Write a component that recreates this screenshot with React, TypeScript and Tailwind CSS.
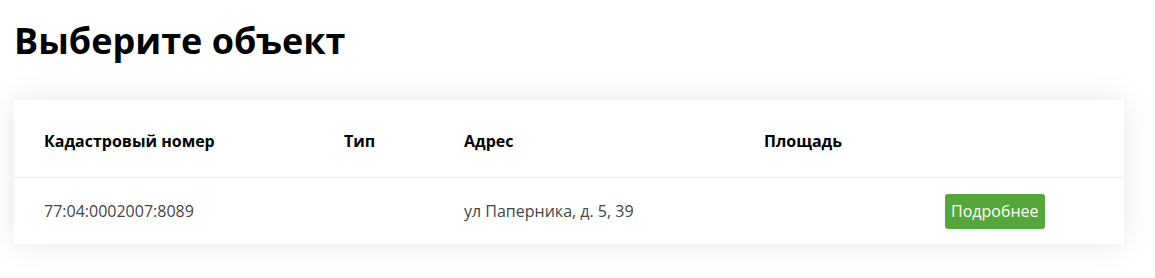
import React from "react";

export default function App() {
  return (
    <div className="min-h-[278px] w-[1155px] bg-white font-['Open_Sans',sans-serif]">
      <div className="px-[14px] pt-[17px]">
        <h1 className="text-[36px] font-bold leading-[48px] text-black">Выберите объект</h1>
        <div className="mt-[35px] w-[1110px] bg-white shadow-[0_0_30px_rgba(0,0,0,0.1)]">
          <div className="grid h-[78px] grid-cols-[300px_120px_300px_181px_1fr] items-center border-b border-[#ebebeb] px-[30px] pt-[4px] text-[16px] font-bold text-black">
            <div>Кадастровый номер</div>
            <div>Тип</div>
            <div>Адрес</div>
            <div>Площадь</div>
            <div></div>
          </div>
          <div className="grid h-[66px] grid-cols-[300px_120px_300px_181px_1fr] items-center px-[30px] text-[16px] text-[#444]">
            <div>77:04:0002007:8089</div>
            <div></div>
            <div>ул Паперника, д. 5, 39</div>
            <div></div>
            <div>
              <button className="h-[35px] rounded-[3px] bg-[#55a63b] px-[6px] text-[16px] text-white">Подробнее</button>
            </div>
          </div>
        </div>
      </div>
    </div>
  );
}
